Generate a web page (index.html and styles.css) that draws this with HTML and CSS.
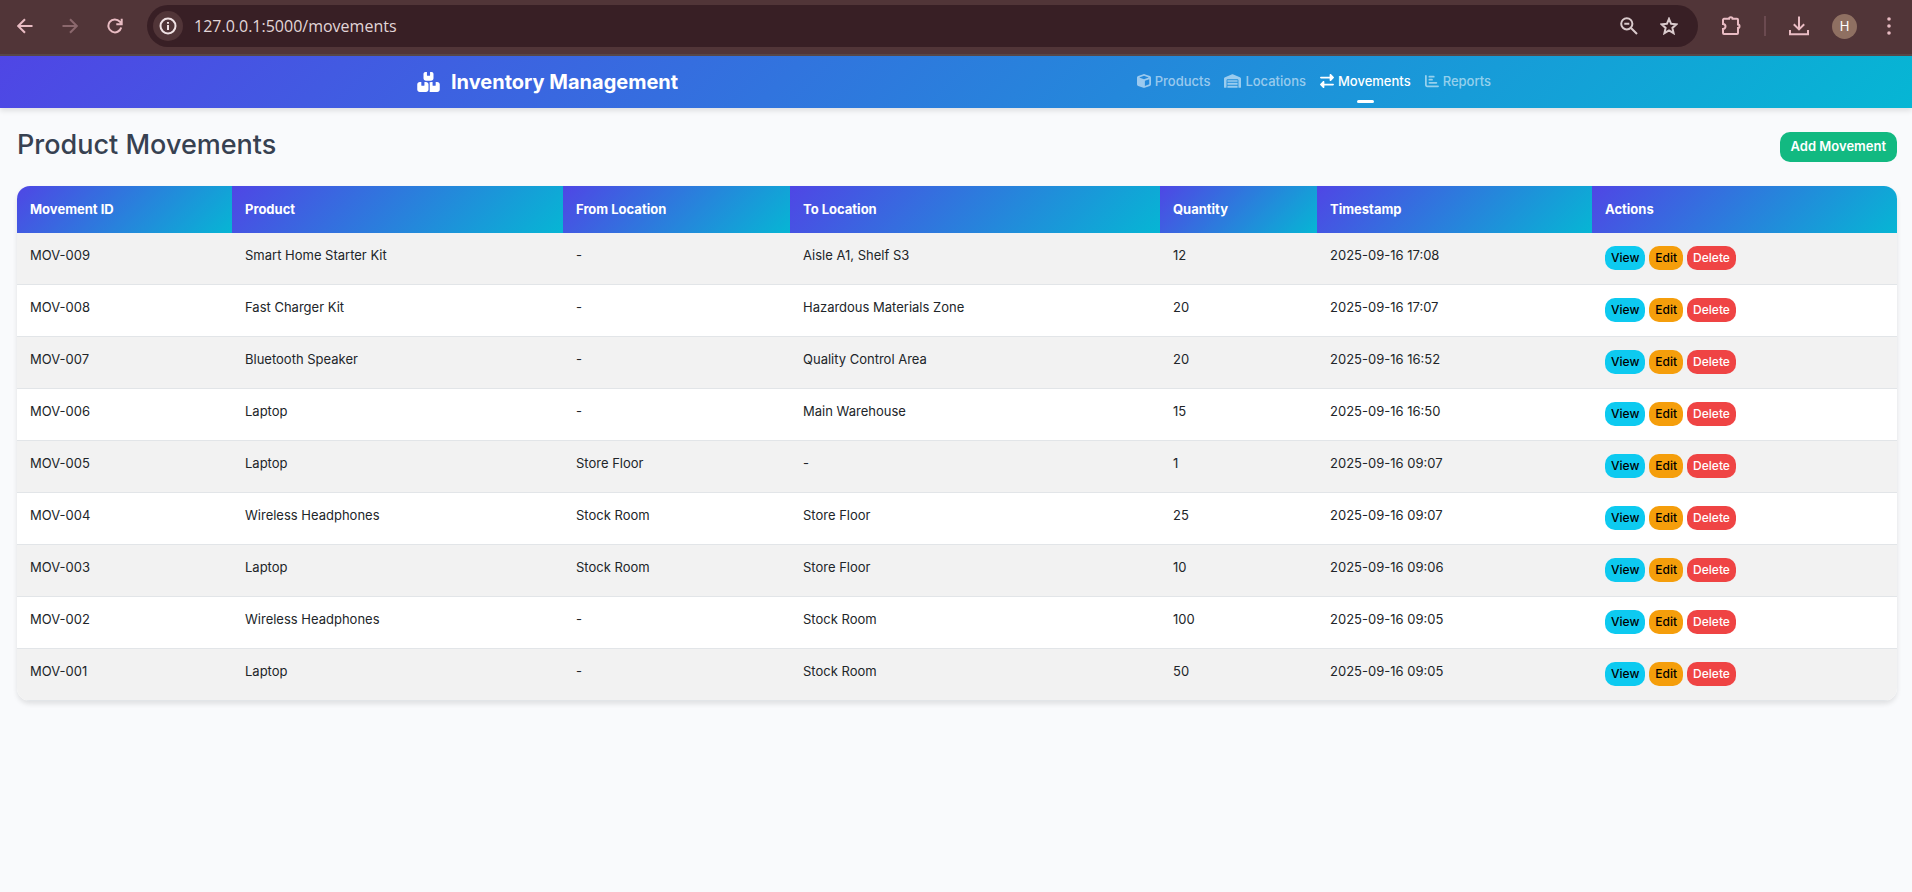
FILE: index.html
```html
<!DOCTYPE html>
<html lang="en">
<head>
<meta charset="utf-8">
<title>Product Movements</title>
<link rel="stylesheet" href="styles.css">
</head>
<body>
<div class="browser">
  <button class="tool" aria-label="Back"><svg viewBox="0 0 16 16"><path d="M15.500 8H1.500M8 1.200 1.200 8 8 14.800"/></svg></button>
  <button class="tool dim" aria-label="Forward"><svg viewBox="0 0 16 16"><path d="M.5 8h14M8 1.200 14.800 8 8 14.800"/></svg></button>
  <button class="tool" aria-label="Reload"><svg viewBox="0 0 16 16"><path d="M14.200 9.500A6.500 6.500 0 1 1 12.800 3.600L14.500 5.500M14.700.8v5.400H9.300"/></svg></button>
  <div class="address">
    <button class="site-info" aria-label="Site information"><svg viewBox="0 0 18 18"><circle cx="9" cy="9" r="7.500"/><path d="M9 8v5M9 5v1.800"/></svg></button>
    <input class="url" type="text" aria-label="Address" value="127.0.0.1:5000/movements">
    <button class="tool pale" aria-label="Zoom"><svg viewBox="0 0 18 18"><circle cx="6.800" cy="6.800" r="5.600"/><path d="M11 11l6 6M4.300 6.800h5"/></svg></button>
    <button class="tool pale" aria-label="Bookmark"><svg viewBox="0 0 18 18"><path d="M9 1.800l2.100 5 5.300.5-4 3.600 1.200 5.300L9 13.400l-4.600 2.800 1.200-5.300-4-3.600 5.300-.5z"/></svg></button>
  </div>
  <div class="tools">
    <button class="tool big" aria-label="Extensions"><svg viewBox="0 0 20 20"><path d="M3 2.800h5a1.800 1.500 0 0 1 3.600 0H16a1 1 0 0 1 1 1V8.500a1.500 1.800 0 0 1 0 3.600V17a1 1 0 0 1-1 1H3a1 1 0 0 1-1-1v-4a2.500 2.500 0 0 0 0-5V3.800a1 1 0 0 1 1-1z"/></svg></button>
    <span class="divider"></span>
    <button class="tool big" aria-label="Downloads"><svg viewBox="0 0 20 20"><path d="M10 .5v12.500M4.800 8.200 10 13.400l5.200-5.200M1 14v4.200h18V14"/></svg></button>
    <button class="avatar" aria-label="Profile">H</button>
    <button class="tool dots" aria-label="Menu"><svg viewBox="0 0 18 18"><circle cx="9" cy="2" r="1.800"/><circle cx="9" cy="9" r="1.800"/><circle cx="9" cy="16" r="1.800"/></svg></button>
  </div>
</div>
<nav class="navbar">
  <div class="container">
    <a class="brand" href="#"><svg class="brand-icon" viewBox="0 0 576 512"><path d="M248 0H208c-26.500 0-48 21.500-48 48V160c0 35.300 28.700 64 64 64H352c35.300 0 64-28.700 64-64V48c0-26.500-21.500-48-48-48H328V80c0 8.800-7.200 16-16 16H264c-8.800 0-16-7.200-16-16V0zM64 256c-35.300 0-64 28.700-64 64V448c0 35.300 28.700 64 64 64H224c35.300 0 64-28.700 64-64V320c0-35.300-28.700-64-64-64H184v80c0 8.800-7.200 16-16 16H120c-8.800 0-16-7.200-16-16V256H64zM352 512H512c35.300 0 64-28.700 64-64V320c0-35.300-28.700-64-64-64H472v80c0 8.800-7.200 16-16 16H408c-8.800 0-16-7.200-16-16V256H352c-15 0-28.800 5.100-39.700 13.800 4.900 10.400 7.700 22 7.700 34.200V464c0 12.200-2.800 23.800-7.700 34.200C323.200 506.900 337 512 352 512z"/></svg>Inventory Management</a>
    <div class="links">
      <a href="#"><svg viewBox="0 0 512 512"><path d="M234.500 5.700c13.900-5 29.100-5 43.100 0l192 68.600C495 83.400 512 107.500 512 134.600V377.400c0 27-17 51.200-42.500 60.300l-192 68.600c-13.900 5-29.100 5-43.100 0l-192-68.600C17 428.600 0 404.500 0 377.400V134.600c0-27 17-51.200 42.500-60.300zM256 66 82.300 128 256 190l173.700-62zM288 434.600l160-57.200V189.400L288 246.600z"/></svg>Products</a>
      <a href="#"><svg class="wide" viewBox="0 0 640 512"><path d="M0 488V171.300c0-26.200 15.900-49.700 40.200-59.400L308.100 4.800c7.600-3.100 16.100-3.100 23.800 0L599.800 111.900c24.300 9.700 40.200 33.300 40.200 59.400V488c0 13.300-10.700 24-24 24H568c-13.300 0-24-10.700-24-24V224c0-17.700-14.300-32-32-32H128c-17.700 0-32 14.300-32 32V488c0 13.300-10.700 24-24 24H24c-13.300 0-24-10.700-24-24zM128 224H512v64H128zM128 320H512v80H128zM128 432H512v80H128z"/></svg>Locations</a>
      <a class="active" href="#" aria-current="page"><svg viewBox="0 0 512 512"><path d="M32 96h320V32c0-12.900 7.800-24.600 19.800-29.600s25.700-2.200 34.900 6.900l96 96c12.500 12.500 12.500 32.800 0 45.300l-96 96c-9.200 9.200-22.900 11.900-34.900 6.900S352 236.900 352 224V160H32c-17.700 0-32-14.300-32-32s14.300-32 32-32zM480 352c17.700 0 32 14.300 32 32s-14.300 32-32 32H160v64c0 12.900-7.800 24.600-19.800 29.600s-25.700 2.200-34.900-6.900l-96-96c-12.500-12.500-12.500-32.800 0-45.300l96-96c9.200-9.200 22.900-11.900 34.900-6.900S160 275.100 160 288v64z"/></svg>Movements</a>
      <a href="#"><svg viewBox="0 0 512 512"><path d="M32 32c17.700 0 32 14.300 32 32V400c0 8.800 7.200 16 16 16H480c17.700 0 32 14.300 32 32s-14.300 32-32 32H80c-44.200 0-80-35.800-80-80V64c0-17.700 14.300-32 32-32zM160 64H320a32 32 0 0 1 0 64H160a32 32 0 0 1 0-64zM160 176H256a32 32 0 0 1 0 64H160a32 32 0 0 1 0-64zM160 288H416a32 32 0 0 1 0 64H160a32 32 0 0 1 0-64z"/></svg>Reports</a>
    </div>
  </div>
</nav>
<main class="page">
  <header class="page-head">
    <h1>Product Movements</h1>
    <button class="add">Add Movement</button>
  </header>
  <table class="movements">
    <colgroup><col class="c-id"><col class="c-product"><col class="c-from"><col class="c-to"><col class="c-qty"><col class="c-time"><col class="c-actions"></colgroup>
    <thead><tr><th>Movement ID</th><th>Product</th><th>From Location</th><th>To Location</th><th>Quantity</th><th>Timestamp</th><th>Actions</th></tr></thead>
    <tbody>
      <tr><td>MOV-009</td><td>Smart Home Starter Kit</td><td>-</td><td>Aisle A1, Shelf S3</td><td>12</td><td>2025-09-16 17:08</td><td><div class="actions"><button class="view">View</button><button class="edit">Edit</button><button class="delete">Delete</button></div></td></tr>
      <tr><td>MOV-008</td><td>Fast Charger Kit</td><td>-</td><td>Hazardous Materials Zone</td><td>20</td><td>2025-09-16 17:07</td><td><div class="actions"><button class="view">View</button><button class="edit">Edit</button><button class="delete">Delete</button></div></td></tr>
      <tr><td>MOV-007</td><td>Bluetooth Speaker</td><td>-</td><td>Quality Control Area</td><td>20</td><td>2025-09-16 16:52</td><td><div class="actions"><button class="view">View</button><button class="edit">Edit</button><button class="delete">Delete</button></div></td></tr>
      <tr><td>MOV-006</td><td>Laptop</td><td>-</td><td>Main Warehouse</td><td>15</td><td>2025-09-16 16:50</td><td><div class="actions"><button class="view">View</button><button class="edit">Edit</button><button class="delete">Delete</button></div></td></tr>
      <tr><td>MOV-005</td><td>Laptop</td><td>Store Floor</td><td>-</td><td>1</td><td>2025-09-16 09:07</td><td><div class="actions"><button class="view">View</button><button class="edit">Edit</button><button class="delete">Delete</button></div></td></tr>
      <tr><td>MOV-004</td><td>Wireless Headphones</td><td>Stock Room</td><td>Store Floor</td><td>25</td><td>2025-09-16 09:07</td><td><div class="actions"><button class="view">View</button><button class="edit">Edit</button><button class="delete">Delete</button></div></td></tr>
      <tr><td>MOV-003</td><td>Laptop</td><td>Stock Room</td><td>Store Floor</td><td>10</td><td>2025-09-16 09:06</td><td><div class="actions"><button class="view">View</button><button class="edit">Edit</button><button class="delete">Delete</button></div></td></tr>
      <tr><td>MOV-002</td><td>Wireless Headphones</td><td>-</td><td>Stock Room</td><td>100</td><td>2025-09-16 09:05</td><td><div class="actions"><button class="view">View</button><button class="edit">Edit</button><button class="delete">Delete</button></div></td></tr>
      <tr><td>MOV-001</td><td>Laptop</td><td>-</td><td>Stock Room</td><td>50</td><td>2025-09-16 09:05</td><td><div class="actions"><button class="view">View</button><button class="edit">Edit</button><button class="delete">Delete</button></div></td></tr>
    </tbody>
  </table>
</main>
</body>
</html>
```

FILE: styles.css
```css
* { box-sizing: border-box; }

body {
  margin: 0;
  background: #f9fafc;
  color: #212529;
  font-family: Inter, "Liberation Sans", sans-serif;
  font-size: 13px;
  line-height: 19px;
}

button { border: 0; padding: 0; font-family: inherit; cursor: pointer; }
a { text-decoration: none; }

/* Browser toolbar */
.browser {
  display: flex;
  align-items: center;
  gap: 29px;
  padding: 5px 14px 7px 17px;
  background: #513538;
  border-bottom: 2px solid #584849;
}
.tool { display: flex; background: none; color: #e9bcc3; }
.tool svg {
  width: 16px;
  height: 16px;
  fill: none;
  stroke: currentColor;
  stroke-width: 2;
}
.dim { color: #8b686d; }
.pale { color: #d9cacc; }
.pale svg { width: 18px; height: 18px; }
.big svg { width: 20px; height: 20px; }
.dots svg { width: 18px; height: 18px; fill: currentColor; stroke: none; }
.address {
  display: flex;
  flex: 1;
  align-items: center;
  gap: 22px;
  margin-left: -5px;
  padding: 0 20px 0 6px;
  height: 42px;
  border-radius: 21px;
  background: #381f25;
}
.site-info {
  display: flex;
  align-items: center;
  justify-content: center;
  width: 30px;
  height: 30px;
  border-radius: 50%;
  background: #513538;
}
.site-info svg { width: 18px; height: 18px; fill: none; stroke: #f0e2e4; stroke-width: 2; }
.url {
  flex: 1;
  min-width: 0;
  margin-left: -11px;
  padding: 0;
  border: 0;
  background: none;
  color: #e2d6d8;
  font-family: "Open Sans", "Noto Sans", sans-serif;
  font-size: 16px;
  line-height: 24px;
}
.tools { display: flex; align-items: center; gap: 23px; margin-left: -6px; }
.divider { width: 2px; height: 20px; background: #6b4a50; }
.avatar {
  width: 25px;
  height: 25px;
  border-radius: 50%;
  background: #8f7062;
  color: #fff;
  font-size: 13px;
}

/* Site navigation */
.navbar {
  background: linear-gradient(135deg, #4f46e5, #06b6d4);
  box-shadow: 0 3px 5px rgba(0, 0, 0, 0.1);
}
.container {
  display: flex;
  align-items: center;
  justify-content: space-between;
  max-width: 1078px;
  margin: 0 auto;
  height: 52px;
}
.brand {
  display: flex;
  align-items: center;
  gap: 11px;
  color: #fff;
  font-size: 20px;
  font-weight: 700;
  line-height: 30px;
}
.brand-icon { width: 23px; height: 20px; fill: currentColor; }
.links { display: flex; gap: 14px; padding: 0 4px 2px 0; }
.links a {
  position: relative;
  display: flex;
  align-items: center;
  gap: 4px;
  color: rgba(255, 255, 255, 0.55);
  font-weight: 500;
}
.links svg { width: 14px; height: 14px; fill: currentColor; fill-rule: evenodd; }
.links .wide { width: 17px; }
.links .active { color: #fff; }
.links .active::after {
  content: "";
  position: absolute;
  left: 50%;
  bottom: -12px;
  width: 17px;
  height: 3px;
  margin-left: -8px;
  border-radius: 2px;
  background: #fff;
}

/* Page content */
.page { padding: 19px 15px 19px 17px; }
.page-head {
  display: flex;
  align-items: center;
  justify-content: space-between;
  margin-bottom: 24px;
}
h1 {
  margin: 0;
  color: #374151;
  font-size: 27px;
  font-weight: 500;
  line-height: 35px;
}
.add {
  align-self: flex-end;
  margin-top: 5px;
  padding: 5px 11px 6px;
  border-radius: 10px;
  background: #12b981;
  color: #fff;
  font-size: 13px;
  font-weight: 600;
  line-height: 19px;
}

.movements {
  width: 100%;
  table-layout: fixed;
  border-collapse: separate;
  border-spacing: 0;
  border-radius: 13px;
  overflow: hidden;
  background: #fff;
  box-shadow: 0 3px 5px rgba(0, 0, 0, 0.1);
}
.c-id { width: 215px; }
.c-product { width: 331px; }
.c-from { width: 227px; }
.c-to { width: 370px; }
.c-qty { width: 157px; }
.c-time { width: 275px; }
.c-actions { width: 305px; }
.movements th {
  padding: 14px 13px;
  background: linear-gradient(135deg, #4f46e5, #06b6d4);
  color: #fff;
  font-weight: 700;
  text-align: left;
}
.movements td {
  padding: 13px 13px 14px;
  border-bottom: 1px solid #e2e5e8;
  vertical-align: top;
}
.movements tbody tr:nth-child(odd) { background: #f2f2f2; }
.actions { display: flex; gap: 4px; }
.actions button {
  height: 24px;
  padding: 0 6px 1px;
  border-radius: 10px;
  font-size: 12px;
  font-weight: 500;
  line-height: 18px;
}
.actions .view { background: #0dcaf0; color: #000; }
.actions .edit { background: #f59e0b; color: #000; }
.actions .delete { background: #ef4444; color: #fff; }
```
